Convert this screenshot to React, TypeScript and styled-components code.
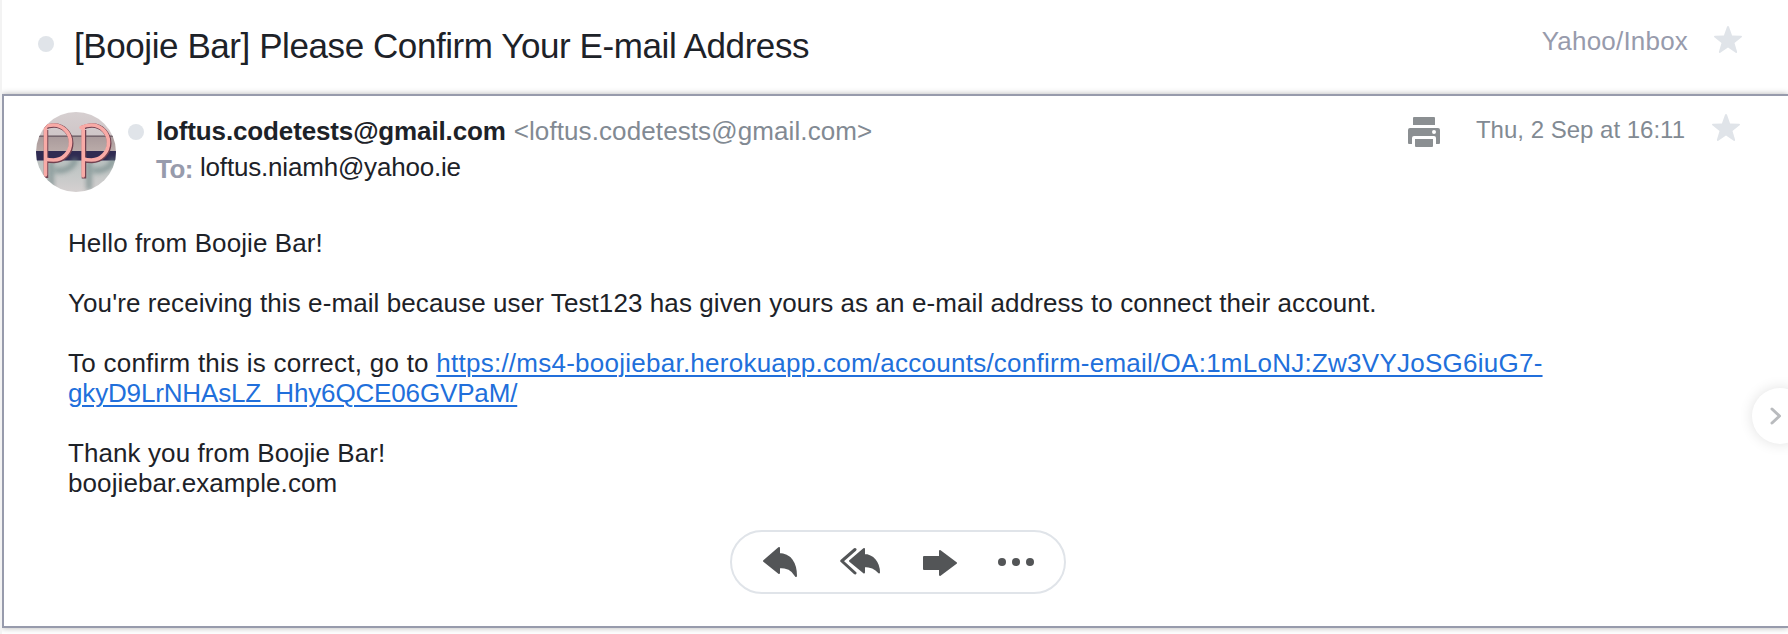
import React from "react";
import styled, { createGlobalStyle } from "styled-components";

const GlobalStyle = createGlobalStyle`
  * { box-sizing: border-box; }
  body {
    margin: 0;
    background: #fff;
    color: #1d2228;
    font-family: "Helvetica Neue", "Liberation Sans", Arial, sans-serif;
    font-size: 26px;
    line-height: 30px;
    overflow: hidden;
  }
`;

const Page = styled.main`
  position: relative;
  width: 1788px;
  height: 634px;
  overflow: hidden;
  border-left: 2px solid #f3f3f3;
  display: flex;
  flex-direction: column;
`;

const SubjectBar = styled.header`
  height: 94px;
  flex: none;
  display: flex;
  align-items: flex-start;
  padding: 26px 46px 0 36px;
`;

const UnreadDot = styled.span<{ $top: number }>`
  width: 16px;
  height: 16px;
  flex: none;
  margin-top: ${(p) => p.$top}px;
  border-radius: 50%;
  background: #e0e4e9;
`;

const Subject = styled.h1`
  margin: 0 auto 0 20px;
  font-size: 35px;
  font-weight: 400;
  line-height: 40px;
  letter-spacing: -0.42px;
  white-space: nowrap;
`;

const Folder = styled.span`
  margin-right: 26px;
  color: #979bac;
  letter-spacing: 0.2px;
`;

const Message = styled.article`
  height: 534px;
  flex: none;
  border: 2px solid #979bac;
  border-right: 0;
  background: #fff;
  box-shadow: 0 0 6px rgba(0, 0, 0, 0.3);
  display: flex;
  flex-direction: column;
`;

const MessageHead = styled.div`
  display: flex;
  align-items: flex-start;
  padding: 16px 48px 0 32px;
  height: 132px;
  flex: none;
`;

const Avatar = styled.svg`
  width: 80px;
  height: 80px;
  flex: none;
  margin-right: 12px;
  border-radius: 50%;
`;

const Addresses = styled.div`
  margin: 4px auto 0 12px;
  white-space: nowrap;
`;

const AddressRow = styled.div`
  display: flex;
  height: 36px;
`;

const SenderName = styled.strong`
  font-weight: 700;
  letter-spacing: -0.14px;
`;

const SenderEmail = styled.span`
  margin-left: 8px;
  color: #828a93;
  letter-spacing: 0.1px;
`;

const ToLabel = styled.span`
  font-weight: 700;
  color: #979bac;
  margin: 2px 7px 0 0;
  letter-spacing: -0.5px;
`;

const Recipient = styled.span`
  letter-spacing: -0.19px;
`;

const MessageMeta = styled.div`
  display: flex;
  align-items: flex-start;
  color: #828a93;
`;

const PrintIcon = styled.svg`
  width: 32px;
  height: 30px;
  margin: 5px 36px 0 0;
  fill: #8b8f92;
`;

const Sent = styled.time`
  margin: 3px 27px 0 0;
  font-size: 24px;
`;

const StarShape = styled.svg<{ $top: number }>`
  width: 28px;
  height: 27px;
  flex: none;
  margin-top: ${(p) => p.$top}px;
  fill: #e0e4e9;
`;

const Body = styled.div`
  padding: 0 0 0 64px;
  width: 1640px;
`;

const Paragraph = styled.p<{ $tracking?: number }>`
  margin: 0 0 30px;
  letter-spacing: ${(p) => p.$tracking ?? 0.09}px;
`;

const Link = styled.a`
  color: #216fdb;
  text-decoration: underline;
  text-decoration-thickness: 2px;
  text-underline-offset: 3px;
`;

const LinkTail = styled.span`
  letter-spacing: -0.155px;
`;

const Actions = styled.div`
  width: 336px;
  height: 64px;
  margin: 2px 0 0 726px;
  border: 2px solid #e0e4e9;
  border-radius: 32px;
  display: flex;
  align-items: center;
  padding-left: 31px;
`;

const ActionIcon = styled.svg<{ $w: number; $gap?: number }>`
  width: ${(p) => p.$w}px;
  height: 32px;
  flex: none;
  margin-left: ${(p) => p.$gap ?? 0}px;
  fill: #535557;
  stroke: #535557;
  stroke-width: 2;
  stroke-linejoin: round;
  stroke-linecap: round;
`;

const NextButton = styled.button`
  position: absolute;
  left: 1750px;
  top: 388px;
  width: 56px;
  height: 56px;
  border: 0;
  border-radius: 50%;
  background: #fff;
  box-shadow: 0 0 14px rgba(0, 0, 0, 0.12);
  padding: 0 0 0 17px;
  display: flex;
  align-items: center;
`;

const Star = ({ top }: { top: number }) => (
  <StarShape $top={top} viewBox="0 0 28 27">
    <path d="M14 0c.5 0 .8.3 1 .8l3.1 8.6 9 .3c.9 0 1.2 1 .5 1.6l-7.100 5.600 2.600 8.800c.2.9-.6 1.500-1.400 1L14 21.500l-7.700 5.200c-.8.5-1.600-.1-1.400-1l2.600-8.800L.4 11.300c-.7-.6-.4-1.600.5-1.600l9-.3L13 .8c.2-.5.5-.8 1-.8z" />
  </StarShape>
);

const Chevron = () => (
  <svg width="13" height="20" viewBox="0 0 13 20" fill="none" stroke="#b9bbbe" strokeWidth="3" strokeLinecap="round" strokeLinejoin="round">
    <path d="M3 3l7.500 7-7.500 7" />
  </svg>
);

const AvatarPhoto = () => (
  <Avatar viewBox="0 0 80 80">
    <defs>
      <linearGradient id="wall" x1="0" y1="0" x2="0" y2="1">
        <stop offset="0" stopColor="#d6cfd0" />
        <stop offset="0.29" stopColor="#cfc6c8" />
        <stop offset="0.3" stopColor="#a99a9b" />
        <stop offset="0.48" stopColor="#b9aaa8" />
        <stop offset="0.5" stopColor="#b5bdbc" />
        <stop offset="0.8" stopColor="#c6c9c8" />
        <stop offset="1" stopColor="#d5d0d0" />
      </linearGradient>
      <filter id="soft" x="-20%" y="-20%" width="140%" height="140%">
        <feGaussianBlur stdDeviation="2.2" />
      </filter>
    </defs>
    <rect width="80" height="80" fill="url(#wall)" />
    <rect y="23.500" width="80" height="1.500" fill="#75666e" />
    <rect y="39" width="80" height="9.500" fill="#302b52" />
    <g fill="none" stroke="#6d8585" strokeWidth="6" opacity="0.6" filter="url(#soft)">
      <path d="M15 50v28M19 58c11 2 20-4 20-12M53 50v28M57 58c11 2 20-4 20-12" />
    </g>
    <g fill="none" stroke="#71404f" strokeWidth="4.500">
      <path d="M10 18V66M8 16c4-2 7-2.500 10-2.500a17 17.500 0 0 1 0 35.500c-4 0-5 0-8-1M48 18V66.500M46 16c4-2 7-2.500 10-2.500a17 17.500 0 0 1 0 35.500c-4 0-5 0-8-1" />
    </g>
    <g fill="none" stroke="#f8aaa6" strokeWidth="3.600" strokeLinecap="round">
      <path d="M9.500 16V63M7 15.500c4-2 7-2.500 10.500-2.500a17 17.500 0 0 1 0 35c-4 0-5 0-8-1M47.200 16V64M45 15.500c4-2 7-2.500 10.500-2.500a17 17.500 0 0 1 0 35c-4 0-5 0-8-1" />
    </g>
  </Avatar>
);

export default function App() {
  return (
    <>
      <GlobalStyle />
      <Page>
        <SubjectBar>
          <UnreadDot $top={10} />
          <Subject>[Boojie Bar] Please Confirm Your E-mail Address</Subject>
          <Folder>Yahoo/Inbox</Folder>
          <Star top={0} />
        </SubjectBar>
        <Message>
          <MessageHead>
            <AvatarPhoto />
            <UnreadDot $top={12} />
            <Addresses>
              <AddressRow>
                <SenderName>loftus.codetests@gmail.com</SenderName>
                <SenderEmail>&lt;loftus.codetests@gmail.com&gt;</SenderEmail>
              </AddressRow>
              <AddressRow>
                <ToLabel>To:</ToLabel>
                <Recipient>loftus.niamh@yahoo.ie</Recipient>
              </AddressRow>
            </Addresses>
            <MessageMeta>
              <PrintIcon viewBox="0 0 32 30">
                <path d="M6 0h20a1 1 0 0 1 1 1v7H5V1a1 1 0 0 1 1-1z" />
                <path fillRule="evenodd" d="M2 11h28a2 2 0 0 1 2 2v13a1 1 0 0 1-1 1h-3v-6a2 2 0 0 0-2-2H6a2 2 0 0 0-2 2v6H1a1 1 0 0 1-1-1V13a2 2 0 0 1 2-2zm24 2a2 2 0 1 0 0 4 2 2 0 0 0 0-4z" />
                <path d="M7 22h18v7a1 1 0 0 1-1 1H8a1 1 0 0 1-1-1z" />
              </PrintIcon>
              <Sent>Thu, 2 Sep at 16:11</Sent>
              <Star top={2} />
            </MessageMeta>
          </MessageHead>
          <Body>
            <Paragraph>Hello from Boojie Bar!</Paragraph>
            <Paragraph>
              You're receiving this e-mail because user Test123 has given yours as an e-mail address to connect their account.
            </Paragraph>
            <Paragraph $tracking={0.25}>
              To confirm this is correct, go to{" "}
              <Link>
                https://ms4-boojiebar.herokuapp.com/accounts/confirm-email/OA:1mLoNJ:Zw3VYJoSG6iuG7-
                <br />
                <LinkTail>gkyD9LrNHAsLZ_Hhy6QCE06GVPaM/</LinkTail>
              </Link>
            </Paragraph>
            <Paragraph>
              Thank you from Boojie Bar!
              <br />
              boojiebar.example.com
            </Paragraph>
          </Body>
          <Actions>
            <ActionIcon $w={34} viewBox="0 0 34 32">
              <path d="M16 2v6c11 0 17 9 17 22-4-7-9-9-17-9v6L1 15z" />
            </ActionIcon>
            <ActionIcon $w={41} $gap={43} viewBox="0 0 41 32">
              <path d="M24 3v6c9 0 15 8 15 17.500-4-5-8-6.500-15-6.500v6.500L10 15z" />
              <path fill="none" strokeWidth="3" d="M15 3.500L1.800 15 15 27" />
            </ActionIcon>
            <ActionIcon $w={34} $gap={42} viewBox="0 0 34 32">
              <path d="M1 11h16V5l16 12-16 12v-6H1z" />
            </ActionIcon>
            <ActionIcon $w={36} $gap={41} viewBox="0 0 36 32">
              <g stroke="none">
                <circle cx="4" cy="16" r="4" />
                <circle cx="18" cy="16" r="4" />
                <circle cx="32" cy="16" r="4" />
              </g>
            </ActionIcon>
          </Actions>
        </Message>
        <NextButton aria-label="Next">
          <Chevron />
        </NextButton>
      </Page>
    </>
  );
}
